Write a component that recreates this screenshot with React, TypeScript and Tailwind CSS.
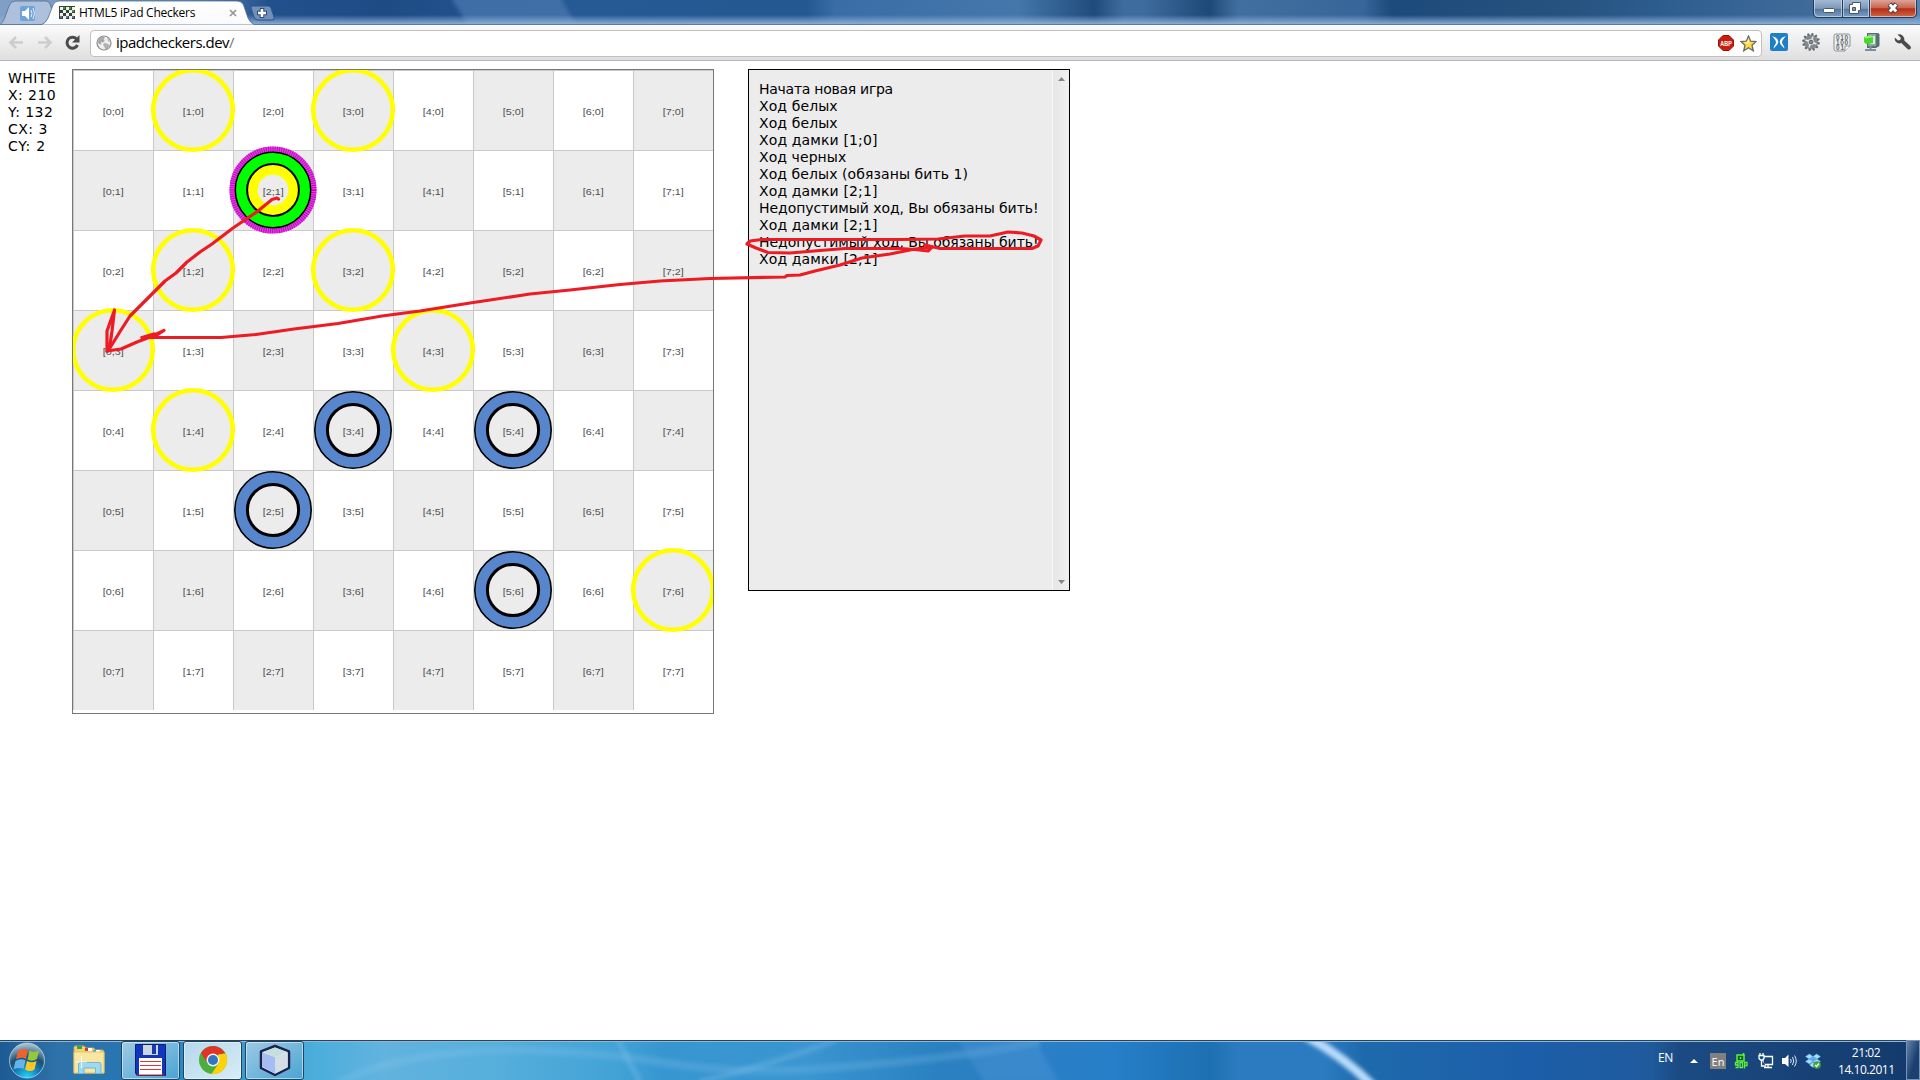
import React from "react";

const N = [0, 1, 2, 3, 4, 5, 6, 7];
const YELLOW = [[1, 0], [3, 0], [1, 2], [3, 2], [0, 3], [4, 3], [1, 4], [7, 6]];
const BLUE = [[3, 4], [5, 4], [2, 5], [5, 6]];
const LOG = [
  { text: "Начата новая игра", spacing: "tracking-[-0.27px]" },
  { text: "Ход белых", spacing: "tracking-[0.1px]" },
  { text: "Ход белых", spacing: "tracking-[0.1px]" },
  { text: "Ход дамки [1;0]", spacing: "tracking-[0.13px]" },
  { text: "Ход черных", spacing: "tracking-[0.08px]" },
  { text: "Ход белых (обязаны бить 1)", spacing: "tracking-[0.08px]" },
  { text: "Ход дамки [2;1]", spacing: "tracking-[0.13px]" },
  { text: "Недопустимый ход, Вы обязаны бить!", spacing: "tracking-[-0.06px]" },
  { text: "Ход дамки [2;1]", spacing: "tracking-[0.13px]" },
  { text: "Недопустимый ход, Вы обязаны бить!", spacing: "tracking-[-0.06px]" },
  { text: "Ход дамки [2;1]", spacing: "tracking-[0.13px]" },
];

function TabStrip() {
  return (
    <div className="relative h-[25px] w-full overflow-hidden bg-[#25568e]">
      <svg className="absolute inset-0" width="1920" height="25">
        <defs>
          <linearGradient id="sky" x1="0" x2="1920" y1="0" y2="0" gradientUnits="userSpaceOnUse">
            <stop offset="0" stopColor="#7f9fc6" />
            <stop offset=".03" stopColor="#7c9bc3" />
            <stop offset=".1" stopColor="#5f86b8" />
            <stop offset=".14" stopColor="#22508c" />
            <stop offset=".2" stopColor="#1e4b84" />
            <stop offset=".3" stopColor="#255a95" />
            <stop offset=".42" stopColor="#245890" />
            <stop offset=".435" stopColor="#3a6da6" />
            <stop offset=".53" stopColor="#4577ab" />
            <stop offset=".57" stopColor="#1f4b7c" />
            <stop offset=".585" stopColor="#3f6c9e" />
            <stop offset=".595" stopColor="#3f6c9e" />
            <stop offset=".63" stopColor="#1d4978" />
            <stop offset=".645" stopColor="#41709f" />
            <stop offset=".71" stopColor="#38659a" />
            <stop offset=".725" stopColor="#1c4a7a" />
            <stop offset=".82" stopColor="#27537f" />
            <stop offset=".86" stopColor="#2c5c8e" />
            <stop offset=".94" stopColor="#3e6a99" />
            <stop offset="1" stopColor="#5683b4" />
          </linearGradient>
          <linearGradient id="stripEdge" x1="0" x2="0" y1="0" y2="1">
            <stop offset=".6" stopColor="#8fb2da" stopOpacity="0" />
            <stop offset=".95" stopColor="#8fb2da" stopOpacity=".9" />
          </linearGradient>
          <linearGradient id="tabFill" x1="0" x2="0" y1="0" y2="1">
            <stop offset="0" stopColor="#fff" />
            <stop offset="1" stopColor="#fafafb" />
          </linearGradient>
          <linearGradient id="close" x1="0" x2="0" y1="0" y2="1">
            <stop offset="0" stopColor="#dba497" />
            <stop offset=".45" stopColor="#c96350" />
            <stop offset=".5" stopColor="#b32e17" />
            <stop offset="1" stopColor="#d66a45" />
          </linearGradient>
          <linearGradient id="winBtn" x1="0" x2="0" y1="0" y2="1">
            <stop offset="0" stopColor="#a3b9d3" />
            <stop offset=".48" stopColor="#7b98ba" />
            <stop offset=".52" stopColor="#53779f" />
            <stop offset="1" stopColor="#7fa0c6" />
          </linearGradient>
          <filter id="bandBlur"><feGaussianBlur stdDeviation="2" /></filter>
        </defs>
        <rect width="1920" height="25" fill="url(#sky)" />
        <path d="M450 -4H560L578 29H470Z" fill="#4674ad" opacity=".8" filter="url(#bandBlur)" />
        <rect width="1920" height="25" fill="url(#stripEdge)" />
        <rect y="24" width="1920" height="1" fill="#5a7ba3" />
        <path d="M0 24.5C4 22 6 14 9 6Q11 1 15 1H46Q49 1 50 4L52 10L47 22Q46 24.5 43 24.5Z" fill="#adc1dc" stroke="#5f7b9f" />
        <rect x="20" y="6" width="15" height="15" rx="2" fill="#6ea3d8" />
        <path d="M22 11H25L29 7V20L25 16H22Z" fill="#fff" />
        <path d="M31 10Q33 13.500 31 17M33 8Q36 13.500 33 19" stroke="#e4f1ff" fill="none" />
        <path d="M41 25Q46 23 48 18L53 5Q54.500 1 59 1H237Q242 1 243.500 5L248 18Q250 23 255 25Z" fill="url(#tabFill)" stroke="#4b6c96" strokeWidth=".8" />
        <path d="M251 8Q250 6 253 6H268Q270 6 271 8L274 17Q275 20 272 20H258Q255 20 254 17Z" fill="#6d90bc" stroke="#33557f" />
        <path d="M257 13H267M262 8V18" stroke="#304c70" strokeWidth="4.500" />
        <path d="M258 13H266M262 9V17" stroke="#fff" strokeWidth="2.500" />
        <g shapeRendering="crispEdges">
          <rect x="59" y="6" width="16" height="13" fill="#3a3f3b" />
          {N.slice(0, 4).map((r) =>
            N.slice(0, 5).map((c) => (
              <rect key={`${r}${c}`} x={60 + c * 3} y={7 + r * 3} width={(r + c) % 2 ? 2 : 3} height={(r + c) % 2 ? 2 : 3} fill={(r + c) % 2 ? (r === 0 || (r === 1 && c > 2) ? "#35a526" : r === 3 ? "#557c9e" : "#3a3f3b") : "#eef0ee"} />
            )),
          )}
        </g>
        <path d="M230 10L236 16M236 10L230 16" stroke="#959595" strokeWidth="1.700" />
        <path d="M1814 0V14Q1814 17.500 1818 17.500H1869V0Z" fill="url(#winBtn)" />
        <path d="M1869 0V17.500H1912Q1916.500 17.500 1916.500 13V0Z" fill="url(#close)" />
        <path d="M1813.500 0V13Q1813.500 17.500 1818 17.500H1912Q1916.500 17.500 1916.500 13V0M1842.500 0V17M1869.500 0V17" fill="none" stroke="#243c59" />
        <path d="M1814.500 0V13Q1815 16.500 1818 16.500H1841.500V0M1843.500 0V16.500H1868.500V0M1870.500 0V16.500H1911Q1915.500 16.500 1915.500 13V0" fill="none" stroke="#d6e2ef" opacity=".65" />
        <rect x="1823.500" y="8.500" width="11" height="4" rx="1" fill="#fff" stroke="#4c5668" />
        <path d="M1852.500 2.500H1860.500V10.500H1858.500V13.500H1849.500V4.500H1852.500Z" fill="#fff" stroke="#48566a" />
        <path d="M1852.500 7.500H1855.500V10.500H1852.500Z" fill="#7f9abb" stroke="#48566a" />
        <path d="M1889.500 4L1896.500 12M1896.500 4L1889.500 12" stroke="#4d3c44" strokeWidth="5" />
        <path d="M1889.800 4.400L1896.200 11.600M1896.200 4.400L1889.800 11.600" stroke="#fff" strokeWidth="3" />
      </svg>
      <span className="absolute left-[79px] top-[3px] whitespace-nowrap font-['Open_Sans',sans-serif] text-[12px] leading-[19px] tracking-[-0.25px] text-black">HTML5 iPad Checkers</span>
    </div>
  );
}

const TEETH = [0, 30, 60, 90, 120, 150, 180, 210, 240, 270, 300, 330];

function Gear() {
  return (
    <svg width="20" height="20" viewBox="-10 -10 20 20">
      {TEETH.map((a) => (
        <path key={a} d="M-1.700 -6L-.8 -9H.8L1.700 -6Z" transform={`rotate(${a + 10})`} fill="#6a6f75" />
      ))}
      <circle r="5" fill="#c9cdd1" stroke="#83888e" strokeWidth="3.400" />
      <path d="M-5.500 -2L5.500 2M-2 5.500L2 -5.500" stroke="#eceef0" strokeWidth="1.400" />
      <circle r="1.800" fill="#8d9298" stroke="#5a5e63" />
    </svg>
  );
}

function Toolbar() {
  return (
    <div className="flex h-9 w-full items-center border-b border-[#b3b5c0] bg-linear-to-b from-[#fbfbfb] to-[#dfdfdf] pl-2">
      <svg width="76" height="34" viewBox="8 25 76 34" className="-mt-px shrink-0" fill="none">
        <path d="M23 42.500H11M16 37L10.500 42.500L16 48" stroke="#cdcdcd" strokeWidth="2.600" />
        <path d="M38 42.500H50M45 37L50.500 42.500L45 48" stroke="#cdcdcd" strokeWidth="2.600" />
        <path d="M77 39.500A5.500 5.500 0 1 0 77.500 45" stroke="#4b4b4b" strokeWidth="3" />
        <path d="M79.500 35V42.500H72Z" fill="#4b4b4b" />
      </svg>
      <div className="mt-px ml-[6px] flex h-[27px] w-[1672px] items-center rounded-[4px] border border-[#c0c0c0] bg-white pl-[5px]">
        <svg width="16" height="16" viewBox="0 0 16 16" className="shrink-0">
          <circle cx="8" cy="8" r="7" fill="#f1f1f1" stroke="#8c8c8c" strokeWidth="1.200" />
          <path d="M2 6Q3.500 2 7.500 1.500L9 3L7.500 4.500L9 6L7 7.500L5 7L5.500 9L4 9.500L2 8Z" fill="#a9a9a9" />
          <path d="M8 8L11 8.500L13.500 10L12 13L9.500 14.500L8.500 12L7 10Z" fill="#b0b0b0" />
          <path d="M11 3L13.500 5L14 7L12 6.500Z" fill="#b8b8b8" />
        </svg>
        <span className="ml-[4px] flex-1 pb-[2px] font-['Open_Sans',sans-serif] text-[15px] leading-5 tracking-[-0.5px] text-black">
          ipadcheckers.dev<span className="text-[#777]">/</span>
        </span>
        <svg width="16" height="16" viewBox="0 0 16 16" className="mr-[6px]">
          <path d="M5 .5H11L15.500 5V11L11 15.500H5L.5 11V5Z" fill="#cc1c0c" stroke="#9a1206" />
          <text x="2.300" y="10.700" fontSize="7.500" fontWeight="700" fontFamily="Liberation Sans" fill="#fff" textLength="11.500" lengthAdjust="spacingAndGlyphs">ABP</text>
        </svg>
        <svg width="17" height="17" viewBox="0 0 17 17" className="mr-[4px]">
          <path d="M8.500 1L10.700 6.200L16 6.500L12 10.200L13.300 15.800L8.500 12.700L3.700 15.800L5 10.200L1 6.500L6.300 6.200Z" fill="#fbdc45" stroke="#6e6b66" strokeWidth="1.300" />
          <path d="M8.500 3.500L9.500 7L8 9L4 7.200L7 7Z" fill="#fff3a6" />
        </svg>
      </div>
      <div className="ml-[8px] -mt-px flex flex-1 items-center">
        <svg width="18" height="18" viewBox="0 0 18 18">
          <rect width="18" height="18" rx="2" fill="#1d80c6" />
          <path d="M2 3L6 4.800Q8.300 6.500 8.300 9Q8 11.500 6 13L3.500 15.500Q3.800 13 5.200 11.500Q6.500 9.500 5.500 7.500Q4 5 2 3ZM16 3L12 4.800Q9.700 6.500 9.700 9Q10 11.500 12 13L14.500 15.500Q14.200 13 12.800 11.500Q11.500 9.500 12.500 7.500Q14 5 16 3Z" fill="#fff" />
        </svg>
        <div className="ml-[13px]"><Gear /></div>
        <svg width="18" height="19" viewBox="0 0 18 19" className="ml-[12px]">
          <path d="M3 1H15Q17 1 17 3V13L12 18H3Q1 18 1 16V3Q1 1 3 1Z" fill="#f0f0f0" stroke="#8a8f94" />
          <path d="M12 18V13H17" fill="#fff" stroke="#8a8f94" />
          <g fontFamily="Liberation Sans" fontWeight="700" fontSize="6.500" fill="#666b70">
            <text x="3" y="6.800" textLength="12">010</text>
            <text x="3" y="11.800" textLength="12">100</text>
            <text x="3" y="16.800" textLength="8">01</text>
          </g>
        </svg>
        <svg width="18" height="20" viewBox="0 0 18 20" className="ml-[12px]">
          <path d="M4 1H15L16.500 2V14L13 16H4Z" fill="#557074" />
          <path d="M5 2H13V14H5Z" fill="#8fa3a3" />
          <path d="M7 4H12V12H7Z" fill="#dce7e5" />
          <path d="M1 5L8 3.500L10 5V11L3 12L1 10Z" fill="#43db25" />
          <path d="M1 5L8 3.500L10 5L3 6.500Z" fill="#a2f488" />
          <path d="M7.500 14V18M2 18H13" stroke="#7891a0" strokeWidth="2" />
        </svg>
        <svg width="18" height="18" viewBox="0 0 18 18" className="ml-[13px]">
          <path d="M3.500 1.500L7 5L6 7L4 7.500L.8 4.500Q.3 8.500 3.500 10Q5.500 10.800 7.300 10L13.500 16Q15.500 17.200 16.600 15.800Q17.700 14.300 16 12.800L10.300 7.500Q10.800 4.500 8.500 2.500Q6.200.7 3.500 1.500Z" fill="#4b4b4b" />
        </svg>
      </div>
    </div>
  );
}

function Board() {
  return (
    <div className="h-[645px] w-[642px] shrink-0 border border-[#777] bg-white">
      <svg width="640" height="640" className="block">
        {N.map((r) =>
          N.map((c) => <rect key={`${c}${r}`} x={c * 80} y={r * 80} width="80" height="80" fill={(r + c) % 2 ? "#ececec" : "#fff"} />),
        )}
        {N.map((i) => (
          <path key={i} d={`M${i * 80 + 0.5} 0V640M0 ${i * 80 + 0.5}H640`} stroke="#c9c9c9" />
        ))}
        {YELLOW.map(([c, r]) => (
          <circle key={`${c}${r}`} cx={c * 80 + 40} cy={r * 80 + 40} r="39.800" fill="#ececec" stroke="#ff0" strokeWidth="4.600" />
        ))}
        {BLUE.map(([c, r]) => (
          <g key={`${c}${r}`} transform={`translate(${c * 80 + 40} ${r * 80 + 40})`}>
            <circle r="38.200" fill="#5786cd" stroke="#000" strokeWidth="1.600" />
            <circle r="25.600" fill="#ececec" stroke="#000" strokeWidth="3" />
          </g>
        ))}
        <g transform="translate(200 120)">
          <circle r="40.800" fill="none" stroke="#dc45dc" strokeWidth="5.600" />
          <circle r="40.800" fill="none" stroke="#c800c8" strokeWidth="5.600" strokeDasharray="1 1.200" />
          <circle r="37.700" fill="#0f0" stroke="#000" strokeWidth="1.500" />
          <circle r="25.900" fill="#ff0" stroke="#000" strokeWidth="2" />
          <circle r="15.300" fill="#ececec" />
        </g>
        {N.map((r) =>
          N.map((c) => (
            <text key={`${c}${r}`} x={c * 80 + 29.7} y={r * 80 + 45} fontFamily="Liberation Sans" fontSize="9.700" textLength="21" lengthAdjust="spacingAndGlyphs" fill="#505050">{`[${c};${r}]`}</text>
          )),
        )}
      </svg>
    </div>
  );
}

function LogPanel() {
  return (
    <div className="ml-[34px] flex h-[522px] w-[322px] shrink-0 border border-black bg-[#ececec]">
      <div className="flex-1 whitespace-nowrap pl-[10px] pt-[11px]">
        {LOG.map(({ text, spacing }, i) => (
          <div key={i} className={spacing}>{text}</div>
        ))}
      </div>
      <div className="flex w-[17px] flex-col items-center justify-between border-l border-[#f8f8f8] bg-linear-to-r from-[#e6e6e6] to-[#f0f0f0] pt-[7px] pb-[6px]">
        <svg width="7" height="4"><path d="M0 4L3.500 0L7 4Z" fill="#868686" /></svg>
        <svg width="7" height="4"><path d="M0 0L3.500 4L7 0Z" fill="#868686" /></svg>
      </div>
    </div>
  );
}

function Annotations() {
  return (
    <svg className="pointer-events-none absolute left-0 top-0" width="1100" height="400" fill="none" stroke="#ed1c24" strokeWidth="3.200" strokeLinejoin="round" strokeLinecap="round">
      <path d="M278.500 199L277 198L272 199.500L258 211L233 228L212 244L200 252L187 262L176 273L165 281L153 293L144 302L130 316L121 330L113 343L108 351" />
      <path d="M114.500 310L107 331V351L110 345L112 331L114.500 310" />
      <path d="M107 351L121 349L137 342L150 337L164 330.500L153 337.500H142L154 334" />
      <path d="M142 337.500H221L256 334.500L294 329L338 323.500L382 316L420 311L470 303L530 294L570 290L620 284.500L660 281L710 278.500L785 277L787 275.500L800 275L815 271L840 265L862 258L890 254L915 249L932 247" />
      <path d="M932 247L928 251L915 249.500L900 248.500H845L820 250.500L790 253L768 252.500L756 248L747 244L750 241L762 239.500H900L938 239L965 236L990 236L1008 232L1022 233L1034 236L1041 240L1038 246L1032 248.500H940L925 245" />
    </svg>
  );
}

function Chrome() {
  return (
    <svg width="30" height="30" viewBox="-15 -15 30 30">
      <circle r="14" fill="#4caf3d" />
      <path d="M-12.120 -7A14 14 0 0 1 12.120 -7L5 -5H0L-5.500 3.500Z" fill="#df3427" />
      <path d="M12.500 -6.500A14 14 0 0 1 -1.500 14L5.500 3.500L5 -5.500Z" fill="#fcd209" />
      <circle r="6.500" fill="#f1f5f9" />
      <circle r="5" fill="#3475bd" />
    </svg>
  );
}

function TaskButton({ children, active }: { children: React.ReactNode; active?: boolean }) {
  return (
    <div className={`flex h-[39px] w-[59px] items-center justify-center rounded-[3px] border border-[#1d4463] ${active ? "bg-linear-to-br from-[#b4d8ec] to-[#d9ecf6]" : "bg-linear-to-br from-[#9ccae4] to-[#47a4d3]"} shadow-[inset_0_0_0_1px_rgba(255,255,255,0.5)]`}>
      {children}
    </div>
  );
}

function Taskbar() {
  return (
    <div className="relative h-10 w-full overflow-hidden">
      <svg className="absolute inset-0" width="1920" height="40">
        <defs>
          <linearGradient id="tb" x1="0" x2="1920" y1="0" y2="0" gradientUnits="userSpaceOnUse">
            <stop offset="0" stopColor="#1c5a93" />
            <stop offset=".03" stopColor="#2d72a8" />
            <stop offset=".07" stopColor="#2676b4" />
            <stop offset=".1" stopColor="#2f8cc5" />
            <stop offset=".165" stopColor="#4caedb" />
            <stop offset=".2" stopColor="#62b3de" />
            <stop offset=".26" stopColor="#55aedb" />
            <stop offset=".32" stopColor="#43a2d6" />
            <stop offset=".345" stopColor="#3796d0" />
            <stop offset=".42" stopColor="#3a95d0" />
            <stop offset=".49" stopColor="#2a80c0" />
            <stop offset=".53" stopColor="#2c80c6" />
            <stop offset=".58" stopColor="#267fc8" />
            <stop offset=".63" stopColor="#1d70b2" />
            <stop offset=".645" stopColor="#2c7bc0" />
            <stop offset=".69" stopColor="#2c7bc0" />
            <stop offset=".71" stopColor="#1e69ac" />
            <stop offset=".8" stopColor="#1c5ea9" />
            <stop offset=".86" stopColor="#1f5a9c" />
            <stop offset=".875" stopColor="#1b4a82" />
            <stop offset="1" stopColor="#143a6c" />
          </linearGradient>
          <radialGradient id="orb" cx=".5" cy="1" r=".95">
            <stop offset="0" stopColor="#20dbff" />
            <stop offset=".4" stopColor="#147ab3" />
            <stop offset=".65" stopColor="#1f4c70" />
            <stop offset="1" stopColor="#a3bccb" />
          </radialGradient>
          <filter id="soft"><feGaussianBlur stdDeviation="2" /></filter>
        </defs>
        <rect width="1920" height="40" fill="url(#tb)" />
        <path d="M337 44Q400 10 520 10Q600 12 660 22Q740 36 840 27Q960 18 1040 2" fill="none" stroke="#8fcbf0" strokeWidth="8" opacity=".22" filter="url(#soft)" />
        <path d="M836 0Q780 22 700 42M618 0L640 42" fill="none" stroke="#8ac8ef" strokeWidth="6" opacity=".28" filter="url(#soft)" />
        <path d="M958 0H1036L1058 42H984Z" fill="#5a9edb" opacity=".3" filter="url(#soft)" />
        <path d="M1306 -4Q1343 16 1373 46" fill="none" stroke="#b9dbfb" strokeWidth="9" filter="url(#soft)" />
        <rect width="1920" height="1" fill="#28435f" />
        <rect y="1" width="1920" height="1" fill="#8db9d9" />
      </svg>
      <div className="relative flex h-full items-center">
        <svg width="54" height="40" viewBox="0 0 54 40">
          <circle cx="27" cy="20.500" r="17.500" fill="url(#orb)" stroke="#bfe3f2" strokeOpacity=".7" />
          <path d="M18 11Q23 7.500 28 10L26 19Q21 16.500 16 19.500Z" fill="#ec6230" />
          <path d="M29.500 10.500Q34 13 39 10.500L37 19Q32 22 27.500 19.500Z" fill="#93c83d" />
          <path d="M15.500 21Q21 18 25.500 20.500L23.500 29Q19 27 13.500 29.500Z" fill="#62b4ec" />
          <path d="M27 21Q32 23.500 36.500 21L34.500 29.500Q30 32.500 25 29.500Z" fill="#fbc725" />
        </svg>
        <svg width="34" height="34" viewBox="0 0 34 34" className="ml-[18px] mr-[15px]">
          <path d="M2 4L3 3H12L14 5L22 5L23 7H31L32 9V30H2Z" fill="#efd375" stroke="#c6a54a" />
          <rect x="5" y="3" width="5" height="3" fill="#31a843" />
          <rect x="13" y="5" width="7" height="3" fill="#fff" /><rect x="13" y="5" width="3" height="3" fill="#d23c1f" />
          <rect x="21" y="7" width="7" height="3" fill="#fff" /><rect x="21" y="7" width="3" height="3" fill="#4aa4dd" />
          <path d="M2 9H32V30H2Z" fill="#f8e6a1" stroke="#dfc570" />
          <path d="M6.500 30.500V21Q6.500 19.500 8 19.500H27Q29 19.500 29 21V30.500H23.500V25H12V30.500Z" fill="#9ed9ef" stroke="#6eb7d8" />
          <path d="M9.500 13V25M4 19H15" stroke="#fff" strokeWidth="1.200" opacity=".8" />
        </svg>
        <div className="flex gap-[3px]">
          <TaskButton>
            <svg width="31" height="32" viewBox="0 0 31 32">
              <path d="M.5.5H30.500V31.500H2L.5 29Z" fill="#1235bd" stroke="#0b1f72" />
              <rect x="8" y="1" width="15" height="10" fill="#cfd5dc" /><rect x="17" y="1" width="4" height="9" fill="#1a3bae" />
              <rect x="4" y="14" width="23" height="17" fill="#fff" />
              <path d="M5 17.500H26M5 21.500H26M5 25.500H26" stroke="#d8343c" />
              <path d="M2 31H29" stroke="#b5303b" />
            </svg>
          </TaskButton>
          <TaskButton active><Chrome /></TaskButton>
          <TaskButton>
            <svg width="32" height="33" viewBox="0 0 32 33">
              <path d="M16 2L30 7.500V24L16 31L2 24V7.500Z" fill="#eaf1f5" stroke="#1c2150" strokeWidth="2.500" strokeLinejoin="round" />
              <path d="M3.500 8.500L16 13V29.500L3.500 23Z" fill="#a5bdf2" />
              <path d="M28.500 8.500L16 13V29.500L28.500 23Z" fill="#d3dee6" />
              <path d="M16 3.500L28.500 8L16 13L3.500 8Z" fill="#c5dfdc" />
            </svg>
          </TaskButton>
        </div>
        <div className="flex-1" />
        <div className="flex h-full w-[262px] items-center font-['Open_Sans',sans-serif] text-[12px] text-white">
          <span className="-mt-[4px] w-[32px] tracking-[-0.3px]">EN</span>
          <svg width="8" height="4" className="mt-px"><path d="M0 4L4 0L8 4Z" fill="#fff" /></svg>
          <span className="ml-[12px] mt-[2px] flex h-[16px] w-[16px] items-center justify-center bg-[#808080] text-[11px] leading-none">En</span>
          <svg width="14" height="16" viewBox="0 0 14 16" className="ml-[8px] mt-[2px]">
            <path d="M3 2H10V8H3Z" fill="#17621b" stroke="#5df23f" strokeWidth="1.500" />
            <path d="M9.500 0V3M6.500 4V6" stroke="#5df23f" strokeWidth="1.500" />
            <path d="M1.500 9.500H4V12H1.500ZM4 12V14.500H1.500M6 9.500H8.500V14.500H6ZM10.500 15.500V9.500H13V12.500H10.500" fill="none" stroke="#5df23f" strokeWidth="1.300" />
          </svg>
          <svg width="16" height="16" viewBox="0 0 16 16" className="ml-[10px] mt-[2px]" fill="none" stroke="#fff" strokeWidth="1.300">
            <path d="M5 3.500H14.500V11.500H5ZM10 12V14.500M6 14.500H14" />
            <path d="M1 2.500H6V5.500L4.500 7H2.500L1 5.500ZM2 0V2M5 0V2M3.500 7V13H8" fill="#1b4a82" />
          </svg>
          <svg width="17" height="16" viewBox="0 0 17 16" className="ml-[7px] mt-[2px]">
            <path d="M1 5H4L7.500 1.500V14L4 11H1Z" fill="#fff" />
            <path d="M9.500 6Q11 8 9.500 10M11.500 4Q14 8 11.500 12M13.500 2.500Q17 8 13.500 13.500" stroke="#dce8f4" fill="none" />
          </svg>
          <svg width="16" height="16" viewBox="0 0 16 16" className="ml-[7px] mt-[2px]">
            <path d="M4.500 1L8 3.500L4 6L.5 3.500ZM11.500 1L15.500 3.500L12 6L8 3.500ZM4 6L8 8.500L4.500 11L.5 8.500ZM12 6L15.500 8.500L11.500 11L8 8.500ZM8 3.500L12 6L8 8.500L4 6ZM8 9L11.500 12L8 14.500L4.500 12Z" fill="#a7dcff" stroke="#5aabea" strokeWidth=".5" />
            <path d="M8 3.500L12 6L8 8.500L4 6Z" fill="#5aabea" />
            <circle cx="12" cy="12" r="3.800" fill="#3fa53a" /><path d="M10 12L11.500 13.500L14 10.500" stroke="#fff" fill="none" strokeWidth="1.200" />
          </svg>
          <div className="ml-auto mr-[12px] mt-px w-[56px] whitespace-nowrap text-center leading-[17px] tracking-[-0.45px]">
            <div>21:02</div>
            <div>14.10.2011</div>
          </div>
          <div className="h-full w-[14px] border border-[#7793b3] bg-linear-to-br from-[#6483a7] to-[#1a3f70] to-60%" />
        </div>
      </div>
    </div>
  );
}

const STATUS = [
  { text: "WHITE", spacing: "tracking-[0.4px]" },
  { text: "X: 210", spacing: "tracking-[0.45px]" },
  { text: "Y: 132", spacing: "tracking-[0.45px]" },
  { text: "CX: 3", spacing: "tracking-[0.5px]" },
  { text: "CY: 2", spacing: "tracking-[0.7px]" },
];

export default function App() {
  return (
    <div className="flex h-[1080px] w-[1920px] flex-col overflow-hidden bg-white">
      <TabStrip />
      <Toolbar />
      <div className="flex flex-1 items-start pt-2 font-['DejaVu_Sans',sans-serif] text-[14px] leading-[17px] text-black">
        <div className="w-[72px] shrink-0 whitespace-nowrap pl-2 pt-px">
          {STATUS.map(({ text, spacing }) => (
            <div key={text} className={spacing}>{text}</div>
          ))}
        </div>
        <Board />
        <LogPanel />
      </div>
      <Taskbar />
      <Annotations />
    </div>
  );
}
